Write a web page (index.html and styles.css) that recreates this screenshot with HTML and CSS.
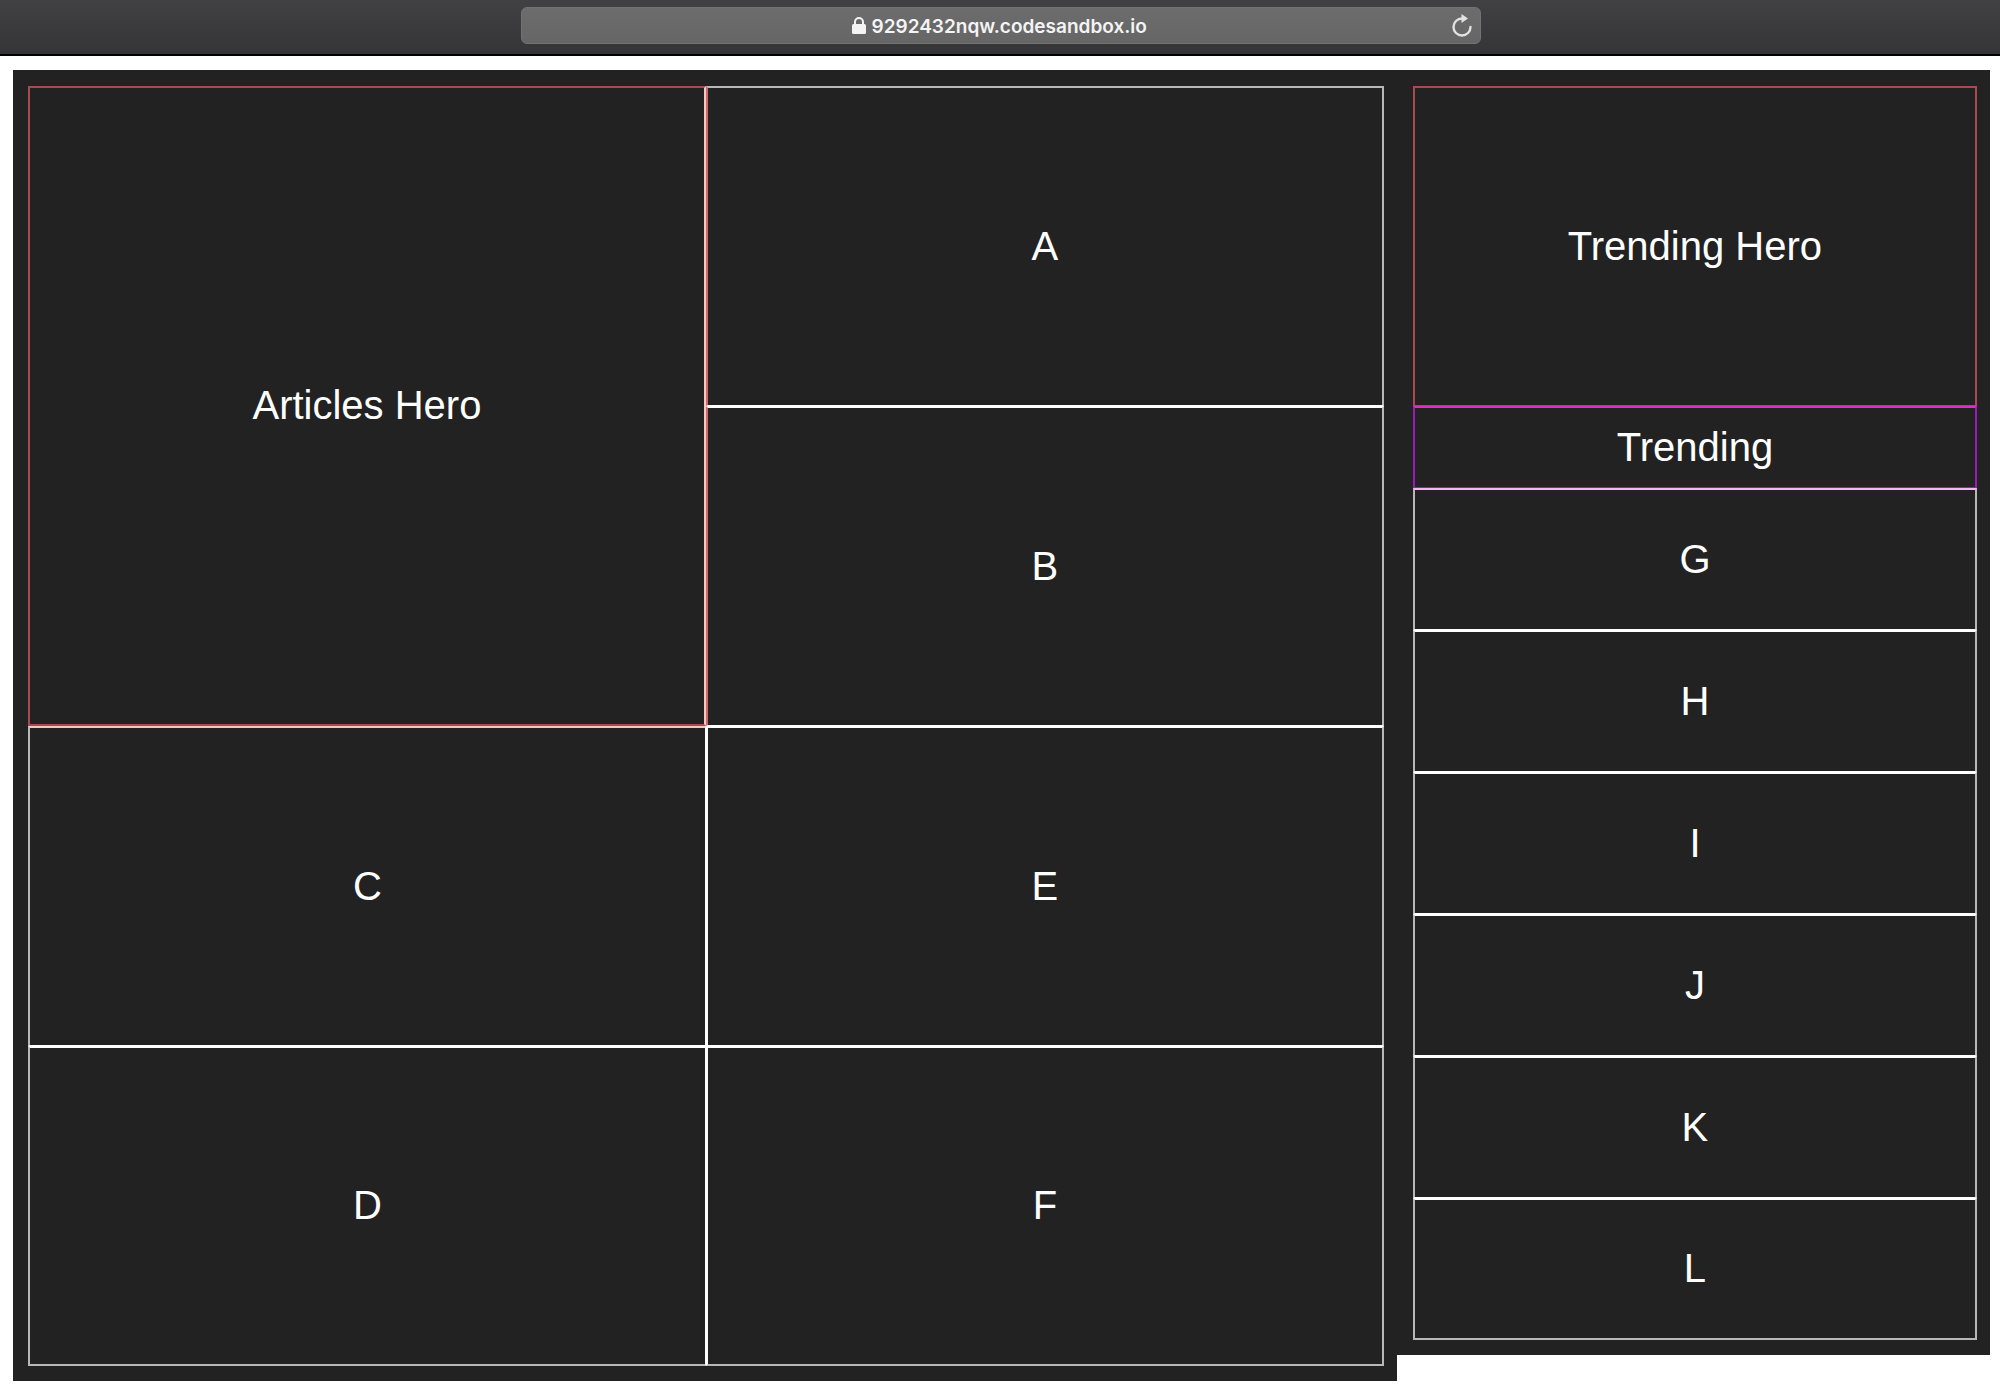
FILE: index.html
```html
<!DOCTYPE html>
<html lang="en">
<head>
<meta charset="utf-8">
<title>9292432nqw.codesandbox.io</title>
<link rel="stylesheet" href="styles.css">
</head>
<body>
<header class="toolbar">
  <form class="address">
    <label class="lock" for="url" aria-label="Address">
      <svg width="16" height="20" viewBox="0 0 16 20"><path d="M4 9V6a4 4 0 0 1 8 0v3" fill="none" stroke="currentColor" stroke-width="2"/><rect x="1" y="8" width="14" height="10" rx="1.5" fill="currentColor"/></svg>
    </label>
    <input class="url" id="url" type="text" value="9292432nqw.codesandbox.io">
    <button class="reload" type="button" aria-label="Reload">
      <svg width="24" height="26" viewBox="0 0 24 26"><path d="M13 5.500H12A8.500 8.500 0 1 0 20.500 14" fill="none" stroke="currentColor" stroke-width="2.400" stroke-linecap="round"/><path d="M11.500 1L18 5.500L11.500 10Z" fill="currentColor"/></svg>
    </button>
  </form>
</header>
<main class="layout">
  <section class="panel articles">
    <article class="cell hero">Articles Hero</article>
    <article class="cell beside-hero top right-edge">A</article>
    <article class="cell beside-hero right-edge">B</article>
    <article class="cell left-edge under-hero">C</article>
    <article class="cell right-edge">E</article>
    <article class="cell left-edge bottom">D</article>
    <article class="cell right-edge bottom">F</article>
  </section>
  <aside class="panel trending">
    <article class="cell trending-hero">Trending Hero</article>
    <h2 class="cell trending-title">Trending</h2>
    <article class="cell item first">G</article>
    <article class="cell item">H</article>
    <article class="cell item">I</article>
    <article class="cell item">J</article>
    <article class="cell item">K</article>
    <article class="cell item bottom">L</article>
  </aside>
</main>
</body>
</html>
```
FILE: styles.css
```css
* {
  box-sizing: border-box;
}

:root {
  --edge: #b8b8b8;
  --red: #a94b4e;
  --pink: #f8c4c4;
  --purple: #9a1bb8;
}

body {
  margin: 0;
  background: #fff;
  color: #fff;
  font-family: "Liberation Sans", Arial, sans-serif;
}

.toolbar {
  display: flex;
  justify-content: center;
  height: 56px;
  padding: 7px 0 0 2px;
  background: linear-gradient(#414143, #353537);
  border-bottom: 2px solid #000;
}

.address {
  display: flex;
  align-items: center;
  justify-content: center;
  position: relative;
  width: 48%;
  height: 37px;
  background: linear-gradient(#6c6c6d, #666667);
  border: 1px solid #737374;
  border-radius: 6px;
  color: #f4f4f4;
}

.lock {
  display: flex;
}

.url {
  width: 280px;
  margin-left: 5px;
  padding: 2px 0 0;
  border: 0;
  background: none;
  color: inherit;
  font: 600 19px/24px Inter, sans-serif;
}

.reload {
  display: flex;
  position: absolute;
  right: 6px;
  padding: 0;
  border: 0;
  background: none;
  color: #e2e2e2;
}

.layout {
  display: grid;
  grid-template-columns: 7fr 3fr;
  align-items: start;
  padding: 14px 10px 5px 13px;
}

.panel {
  display: grid;
  padding: 16px 13px 15px 15px;
  background: #222;
}

.articles {
  grid-template-columns: 1fr 1fr;
  grid-auto-rows: 320px;
}

.trending {
  grid-template-rows: 320px 82px;
  grid-auto-rows: 142px;
  padding-left: 16px;
}

.cell {
  display: flex;
  align-items: center;
  justify-content: center;
  margin: 0;
  padding-bottom: 2px;
  border: solid #fff;
  border-width: 2px 1px 1px 2px;
  font-size: 40px;
  font-weight: 400;
  line-height: 48px;
}

.hero {
  grid-row: span 2;
  border-width: 2px;
  border-color: var(--red) var(--pink) var(--red) var(--red);
}

.top {
  border-top-color: var(--edge);
}

.beside-hero {
  border-left-color: #d06a6a;
}

.left-edge {
  border-left-color: var(--edge);
}

.right-edge {
  border-right: 2px solid var(--edge);
}

.bottom {
  border-bottom: 2px solid var(--edge);
}

.under-hero {
  border-top-color: var(--pink);
}

.trending-hero {
  border-width: 2px 2px 1px;
  border-color: var(--red);
}

.trending-title {
  border-color: #dc30c0 var(--purple) var(--purple);
  border-width: 2px 2px 1px;
}

.item {
  border-right-width: 2px;
  border-left-color: var(--edge);
  border-right-color: var(--edge);
}

.first {
  border-top-color: #f5b6f5;
}
```
